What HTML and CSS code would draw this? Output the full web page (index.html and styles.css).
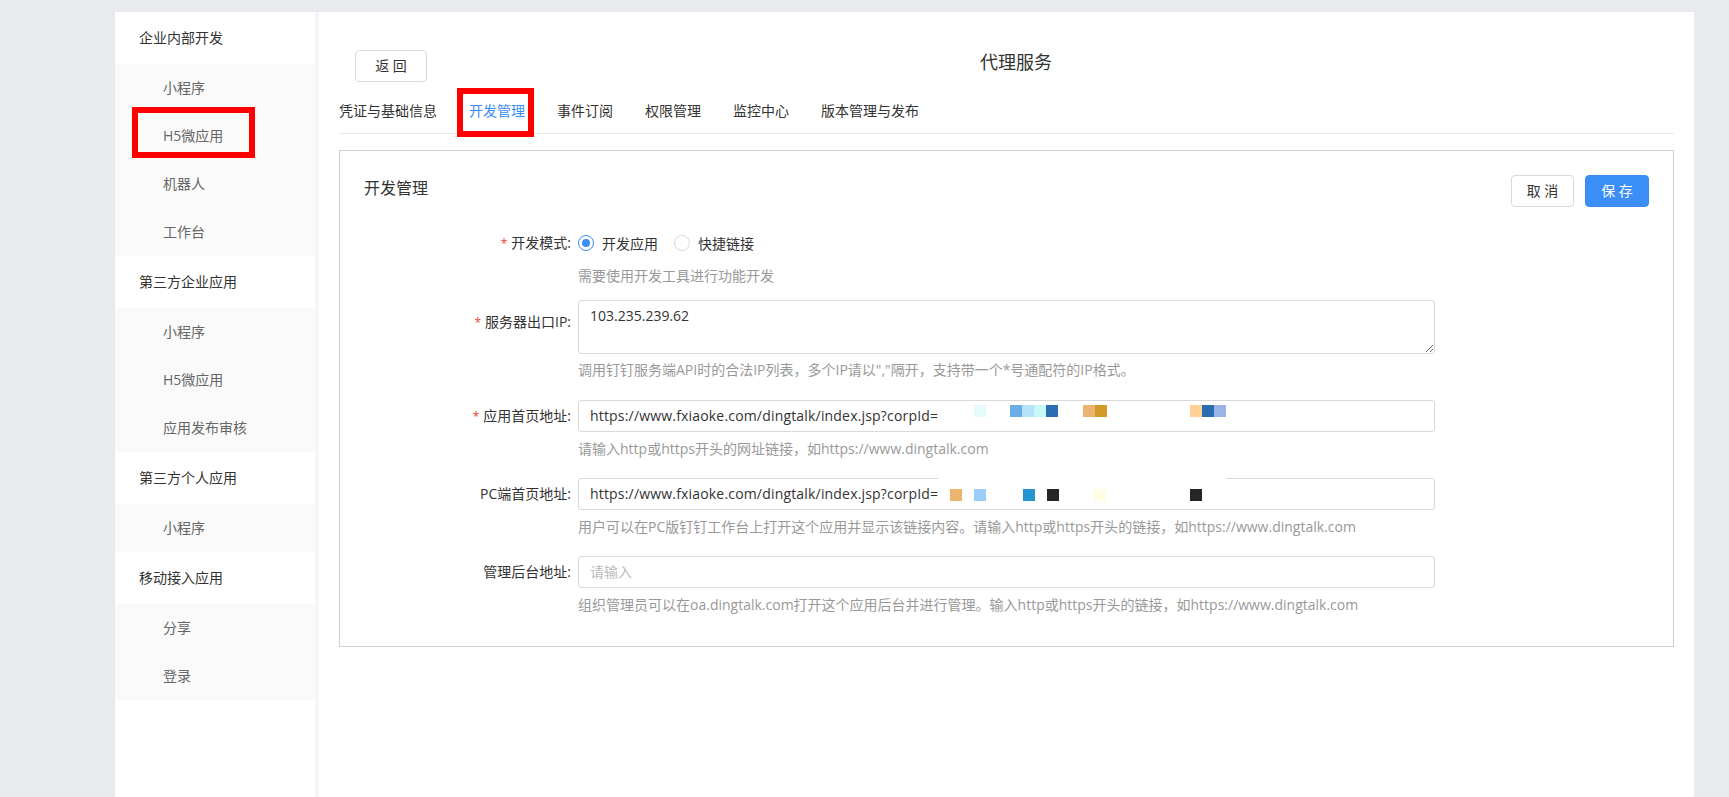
FILE: index.html
```html
<!DOCTYPE html>
<html lang="zh-CN">
<head>
<meta charset="utf-8">
<title>代理服务</title>
<link rel="stylesheet" href="styles.css">
</head>
<body>
<div class="layout">
  <aside class="sidebar">
    <div class="nav-group">
      <div class="nav-title">企业内部开发</div>
      <ul class="nav-list">
        <li class="nav-item">小程序</li>
        <li class="nav-item nav-item--marked">H5微应用<span class="mark mark--side"></span></li>
        <li class="nav-item">机器人</li>
        <li class="nav-item">工作台</li>
      </ul>
    </div>
    <div class="nav-group">
      <div class="nav-title">第三方企业应用</div>
      <ul class="nav-list">
        <li class="nav-item">小程序</li>
        <li class="nav-item">H5微应用</li>
        <li class="nav-item">应用发布审核</li>
      </ul>
    </div>
    <div class="nav-group">
      <div class="nav-title">第三方个人应用</div>
      <ul class="nav-list">
        <li class="nav-item">小程序</li>
      </ul>
    </div>
    <div class="nav-group">
      <div class="nav-title">移动接入应用</div>
      <ul class="nav-list">
        <li class="nav-item">分享</li>
        <li class="nav-item">登录</li>
      </ul>
    </div>
  </aside>

  <main class="main">
    <header class="page-head">
      <button class="btn btn--back" type="button">返 回</button>
      <h1 class="page-title">代理服务</h1>
    </header>

    <nav class="tabs">
      <span class="tab">凭证与基础信息</span>
      <span class="tab tab--active">开发管理<span class="mark mark--tab"></span></span>
      <span class="tab">事件订阅</span>
      <span class="tab">权限管理</span>
      <span class="tab">监控中心</span>
      <span class="tab">版本管理与发布</span>
    </nav>

    <section class="card">
      <div class="card-head">
        <h2 class="card-title">开发管理</h2>
        <div class="card-actions">
          <button class="btn" type="button">取 消</button>
          <button class="btn btn--primary" type="button">保 存</button>
        </div>
      </div>

      <div class="form">
        <div class="form-item form-item--radio">
          <label class="form-label"><span class="req">*</span>开发模式:</label>
          <div class="form-control">
            <div class="radio-group">
              <span class="radio radio--checked"><span class="radio-dot"></span></span>
              <span class="radio-text">开发应用</span>
              <span class="radio"></span>
              <span class="radio-text">快捷链接</span>
            </div>
            <div class="help">需要使用开发工具进行功能开发</div>
          </div>
        </div>

        <div class="form-item form-item--area">
          <label class="form-label form-label--tall"><span class="req">*</span>服务器出口IP:</label>
          <div class="form-control">
            <textarea class="textarea" readonly>103.235.239.62</textarea>
            <div class="help">调用钉钉服务端API时的合法IP列表，多个IP请以","隔开，支持带一个*号通配符的IP格式。</div>
          </div>
        </div>

        <div class="form-item">
          <label class="form-label"><span class="req">*</span>应用首页地址:</label>
          <div class="form-control">
            <div class="field field--url">https://www.fxiaoke.com/dingtalk/index.jsp?corpId=<span class="mosaic mosaic--a"><i style="left:395px;background:#e6fcfc"></i><i style="left:431px;background:#6aaee8"></i><i style="left:443px;background:#b5e3fa"></i><i style="left:455px;background:#c8f9f9"></i><i style="left:467px;background:#2a6db0"></i><i style="left:504px;background:#ebb46e"></i><i style="left:516px;background:#d2982a"></i><i style="left:611px;background:#ffd098"></i><i style="left:623px;background:#2a6db0"></i><i style="left:635px;background:#98b4e8"></i></span></div>
            <div class="help">请输入http或https开头的网址链接，如https://www.dingtalk.com</div>
          </div>
        </div>

        <div class="form-item">
          <label class="form-label">PC端首页地址:</label>
          <div class="form-control">
            <div class="field field--url">https://www.fxiaoke.com/dingtalk/index.jsp?corpId=<span class="mosaic mosaic--b"><b class="mosaic-strip"></b><i style="left:371px;background:#ecb46c"></i><i style="left:395px;background:#9ccdf8"></i><i style="left:444px;background:#2694d0"></i><i style="left:468px;background:#262626"></i><i style="left:515px;background:#fffde6"></i><i style="left:611px;background:#262626"></i></span></div>
            <div class="help">用户可以在PC版钉钉工作台上打开这个应用并显示该链接内容。请输入http或https开头的链接，如https://www.dingtalk.com</div>
          </div>
        </div>

        <div class="form-item">
          <label class="form-label">管理后台地址:</label>
          <div class="form-control">
            <div class="field field--empty">请输入</div>
            <div class="help">组织管理员可以在oa.dingtalk.com打开这个应用后台并进行管理。输入http或https开头的链接，如https://www.dingtalk.com</div>
          </div>
        </div>
      </div>
    </section>
  </main>
</div>
</body>
</html>
```

FILE: styles.css
```css
* { box-sizing: border-box; }

html, body {
  margin: 0;
  padding: 0;
}

body {
  background: #e9eaee;
  font-family: "Open Sans", "Noto Sans CJK SC", sans-serif;
  font-size: 14px;
  color: #333;
}

.layout {
  display: flex;
  gap: 4px;
  margin: 12px 35px 0 115px;
  min-height: 785px;
  background: #f6f6f7;
}

/* sidebar */
.sidebar {
  width: 200px;
  flex: none;
  background: #fff;
}

.nav-title {
  height: 52px;
  line-height: 52px;
  padding-left: 24px;
  color: #333;
}

.nav-list {
  list-style: none;
  margin: 0;
  padding: 0;
  background: #fafafa;
}

.nav-item {
  position: relative;
  height: 48px;
  line-height: 48px;
  padding-left: 48px;
  color: #666;
}

/* annotation boxes */
.mark {
  position: absolute;
  border: 6px solid #ff0000;
  pointer-events: none;
}

.mark--side {
  left: 17px;
  top: -5px;
  width: 123px;
  height: 51px;
}

.mark--tab {
  left: -12px;
  top: -13px;
  width: 77px;
  height: 49px;
}

/* main */
.main {
  flex: 1;
  background: #fff;
  padding: 0 20px;
}

.page-head {
  display: flex;
  align-items: flex-start;
  padding-top: 38px;
}

.btn {
  height: 32px;
  padding: 0 14px;
  border: 1px solid #d9d9d9;
  border-radius: 4px;
  background: #fff;
  color: #333;
  font-family: inherit;
  font-size: 14px;
  line-height: 30px;
}

.btn--back {
  width: 72px;
  margin-left: 16px;
}

.btn--primary {
  background: #3a8ef6;
  border-color: #3a8ef6;
  color: #fff;
}

.page-title {
  margin: 0 0 0 553px;
  font-size: 18px;
  font-weight: normal;
  line-height: 24px;
  color: #333;
}

.tabs {
  display: flex;
  gap: 32px;
  padding-top: 19px;
  padding-bottom: 12px;
  border-bottom: 1px solid #e9e9e9;
}

.tab {
  position: relative;
  line-height: 20px;
  color: #333;
}

.tab--active {
  color: #3a8ef6;
}

/* card */
.card {
  margin-top: 16px;
  border: 1px solid #d0d0d0;
  padding: 24px 24px 31px;
}

.card-head {
  display: flex;
  justify-content: space-between;
  align-items: flex-start;
}

.card-title {
  margin: 1px 0 0;
  font-size: 16px;
  font-weight: normal;
  line-height: 24px;
  color: #333;
}

.card-actions {
  display: flex;
  gap: 11px;
}

.card-actions .btn {
  width: 63px;
}

.card-actions .btn--primary {
  width: 64px;
}

.form {
  margin-top: 20px;
}

.form-item {
  display: grid;
  grid-template-columns: 214px 857px;
  margin-bottom: 19px;
}

.form-item--radio {
  margin-bottom: 14px;
}

.form-item--area {
  margin-bottom: 20px;
}

.form-item:last-child {
  margin-bottom: 0;
}

.form-label {
  text-align: right;
  padding-right: 7px;
  line-height: 32px;
  color: #333;
}

.form-label--tall {
  padding-top: 6px;
}

.req {
  color: #f04134;
  font-size: 12px;
  margin-right: 4px;
}

.radio-group {
  display: flex;
  align-items: center;
  height: 32px;
}

.radio {
  width: 16px;
  height: 16px;
  border: 1px solid #d9d9d9;
  border-radius: 50%;
  display: flex;
  align-items: center;
  justify-content: center;
  background: #fff;
}

.radio--checked {
  border-color: #3a8ef6;
}

.radio-dot {
  width: 8px;
  height: 8px;
  border-radius: 50%;
  background: #3a8ef6;
}

.radio-text {
  margin: 0 16px 0 8px;
  color: #333;
}

.help {
  margin-top: 7px;
  line-height: 20px;
  color: #999;
  white-space: nowrap;
}

.form-item--area .help {
  margin-top: 6px;
}

.textarea {
  display: block;
  width: 857px;
  height: 54px;
  margin: 0;
  padding: 5px 11px;
  border: 1px solid #d9d9d9;
  border-radius: 3px;
  font-family: inherit;
  font-size: 14px;
  line-height: 20px;
  color: #333;
  resize: vertical;
  outline: none;
}

.field {
  position: relative;
  height: 32px;
  padding: 0 11px;
  border: 1px solid #d9d9d9;
  border-radius: 3px;
  line-height: 30px;
  color: #333;
  white-space: nowrap;
}

.field--url {
  letter-spacing: 0.18px;
}

.field--empty {
  color: #bbb;
}

.mosaic {
  position: absolute;
  left: 0;
  top: 0;
  width: 100%;
  height: 100%;
  letter-spacing: 0;
}

.mosaic i {
  position: absolute;
  width: 12px;
  height: 12px;
}

.mosaic--a i { top: 4px; }
.mosaic--b i { top: 10px; }

.mosaic-strip {
  position: absolute;
  left: 359px;
  top: -2px;
  width: 288px;
  height: 3px;
  background: #fff;
}
```
